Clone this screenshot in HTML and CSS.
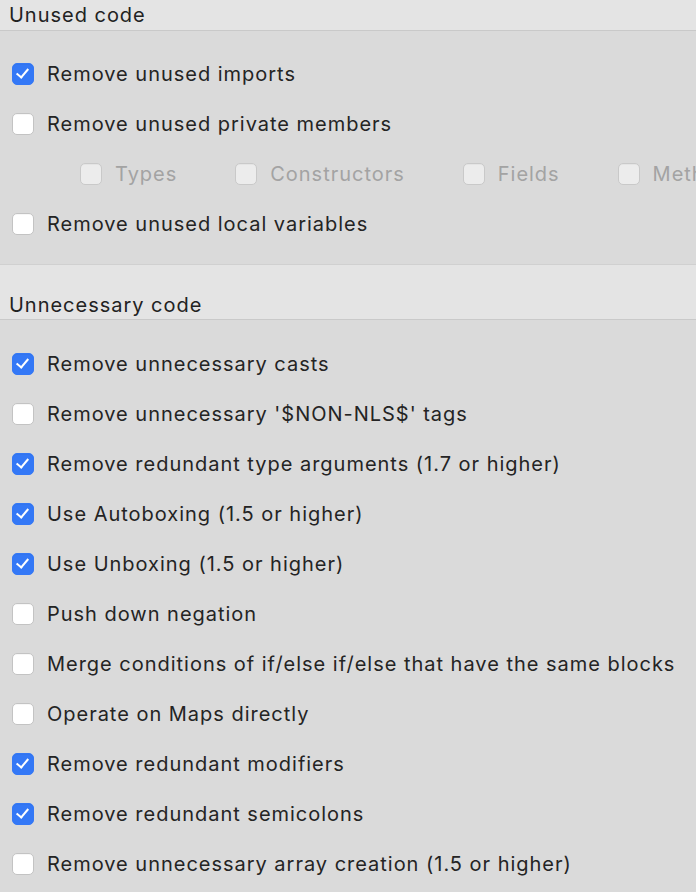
FILE: index.html
```html
<!DOCTYPE html>
<html>
<head>
<meta charset="utf-8">
<link rel="stylesheet" href="styles.css">
</head>
<body>
<div class="page">
  <div class="header first">Unused code</div>
  <div class="group">
    <div class="row"><span class="cb on"></span><span class="label">Remove unused imports</span></div>
    <div class="row"><span class="cb"></span><span class="label">Remove unused private members</span></div>
    <div class="row sub">
      <div class="item"><span class="cb dis"></span><span class="label dim">Types</span></div>
      <div class="item"><span class="cb dis"></span><span class="label dim">Constructors</span></div>
      <div class="item"><span class="cb dis"></span><span class="label dim">Fields</span></div>
      <div class="item"><span class="cb dis"></span><span class="label dim">Methods</span></div>
    </div>
    <div class="row"><span class="cb"></span><span class="label">Remove unused local variables</span></div>
  </div>
  <div class="header second">Unnecessary code</div>
  <div class="group lower">
    <div class="row"><span class="cb on"></span><span class="label">Remove unnecessary casts</span></div>
    <div class="row"><span class="cb"></span><span class="label">Remove unnecessary '$NON-NLS$' tags</span></div>
    <div class="row"><span class="cb on"></span><span class="label">Remove redundant type arguments (1.7 or higher)</span></div>
    <div class="row"><span class="cb on"></span><span class="label">Use Autoboxing (1.5 or higher)</span></div>
    <div class="row"><span class="cb on"></span><span class="label">Use Unboxing (1.5 or higher)</span></div>
    <div class="row"><span class="cb"></span><span class="label">Push down negation</span></div>
    <div class="row"><span class="cb"></span><span class="label">Merge conditions of if/else if/else that have the same blocks</span></div>
    <div class="row"><span class="cb"></span><span class="label">Operate on Maps directly</span></div>
    <div class="row"><span class="cb on"></span><span class="label">Remove redundant modifiers</span></div>
    <div class="row"><span class="cb on"></span><span class="label">Remove redundant semicolons</span></div>
    <div class="row"><span class="cb"></span><span class="label">Remove unnecessary array creation (1.5 or higher)</span></div>
  </div>
</div>
</body>
</html>
```
FILE: styles.css
```css
html, body {
  margin: 0;
  padding: 0;
  background: #dadada;
}
.page {
  width: 696px;
  height: 892px;
  overflow: hidden;
  font-family: Inter, "Liberation Sans", sans-serif;
  font-size: 20px;
  letter-spacing: 0.98px;
  color: #242424;
  background: #dadada;
}
.header {
  background: #e4e4e4;
  padding-left: 9px;
  line-height: 30px;
  border-bottom: 1px solid #c9c9c9;
  color: #222;
}
.header.second {
  border-top: 1px solid #d0d0d0;
  padding-top: 26px;
  line-height: 28px;
}
.group {
  padding-top: 18px;
  padding-bottom: 15px;
}
.group.lower {
  padding-top: 19px;
}
.row {
  height: 50px;
  display: flex;
  align-items: center;
  padding-left: 12px;
  white-space: nowrap;
}
.row.sub {
  padding-left: 80px;
  gap: 58px;
}
.item {
  display: flex;
  align-items: center;
}
.cb {
  flex: none;
  width: 20px;
  height: 20px;
  border: 1px solid #c3c3c3;
  border-radius: 5px;
  background: #ffffff;
  box-shadow: inset 0 1px 0 rgba(0,0,0,0.03);
  position: relative;
  margin-right: 13px;
}
.cb.dis {
  background: #ececec;
  border-color: #c9c9c9;
}
.cb.on {
  background: #3478f6;
  border-color: #3478f6;
}
.cb.on::after {
  content: "";
  position: absolute;
  left: 6px;
  top: 2px;
  width: 5px;
  height: 10px;
  border-right: 2.6px solid #fff;
  border-bottom: 2.6px solid #fff;
  transform: rotate(40deg);
}
.label.dim {
  color: #a3a3a3;
}
```
